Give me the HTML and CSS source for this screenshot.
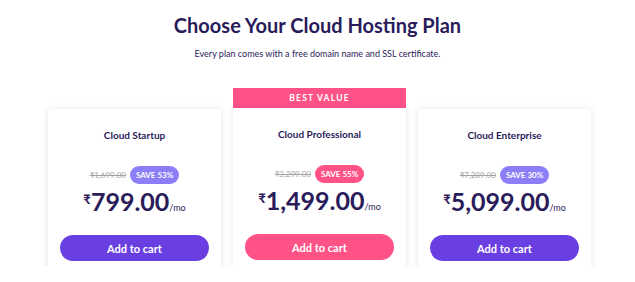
FILE: index.html
```html
<!DOCTYPE html>
<html lang="en">
<head>
    <meta charset="UTF-8">
    <meta name="viewport" content="width=device-width, initial-scale=1.0">
    <title>Cloud Hosting Plans</title>
    <link rel="stylesheet" href="styles.css">
</head>
<body>

    <h1>Choose Your Cloud Hosting Plan</h1>
    <p class="subtitle">Every plan comes with a free domain name and SSL certificate.</p>

    <div class="plans">
        <div class="plan">
            <div class="card">
                <h2>Cloud Startup</h2>
                <div class="price-row">
                    <span class="old-price">₹1,699.00</span>
                    <span class="save">SAVE 53%</span>
                </div>
                <div class="price"><span class="currency">₹</span>799.00<span class="per">/mo</span></div>
                <button class="cart">Add to cart</button>
            </div>
        </div>

        <div class="plan featured">
            <div class="banner">BEST VALUE</div>
            <div class="card">
                <h2>Cloud Professional</h2>
                <div class="price-row">
                    <span class="old-price">₹3,299.00</span>
                    <span class="save">SAVE 55%</span>
                </div>
                <div class="price"><span class="currency">₹</span>1,499.00<span class="per">/mo</span></div>
                <button class="cart">Add to cart</button>
            </div>
        </div>

        <div class="plan">
            <div class="card">
                <h2>Cloud Enterprise</h2>
                <div class="price-row">
                    <span class="old-price">₹7,289.00</span>
                    <span class="save">SAVE 30%</span>
                </div>
                <div class="price"><span class="currency">₹</span>5,099.00<span class="per">/mo</span></div>
                <button class="cart">Add to cart</button>
            </div>
        </div>
    </div>

</body>
</html>
```

FILE: styles.css
```css
body {
    margin: 0;
    padding: 0;
    font-family: Lato, "Noto Sans", sans-serif;
    background-color: #ffffff;
    color: #2a1c5a; /* dark navy purple */
    text-align: center;
    overflow: hidden;
}

h1 {
    font-size: 20px;
    font-weight: 700;
    margin: 13px 0 0;
    line-height: 24px;
}

.subtitle {
    font-size: 9px;
    margin: 11px 0 0;
    line-height: 12px;
}

.plans {
    display: flex;
    justify-content: center;
    align-items: flex-start;
    gap: 12px;
    margin-top: 28px;
    padding-left: 4px;
    height: 178px; /* bottom of the cards is cut off */
    overflow: hidden;
}

.plan {
    width: 173px;
    margin-top: 21px;
}

.plan.featured {
    margin-top: 0;
}

.banner {
    background-color: #ff5287;
    color: #ffffff;
    font-size: 8.5px;
    font-weight: 700;
    letter-spacing: 1.2px;
    height: 20px;
    line-height: 20px;
}

.card {
    background-color: #ffffff;
    border-radius: 4px;
    box-shadow: 0 0 6px rgba(40, 30, 90, 0.12);
    padding: 20px 12px 30px;
    height: 200px;
    box-sizing: border-box;
}

.featured .card {
    border-radius: 0 0 4px 4px;
}

h2 {
    font-size: 10px;
    font-weight: 700;
    margin: 0;
    line-height: 13px;
}

.price-row {
    display: flex;
    justify-content: center;
    align-items: center;
    gap: 4px;
    margin-top: 24px;
}

.old-price {
    font-size: 8px;
    color: #a3a3a8;
    text-decoration: line-through;
}

.save {
    background-color: #8c7ef7;
    color: #ffffff;
    font-size: 8px;
    font-weight: 700;
    height: 18px;
    line-height: 18px;
    padding: 0 6px;
    border-radius: 9px;
}

.featured .save {
    background-color: #ff5287;
}

.price {
    font-size: 25px;
    font-weight: 700;
    line-height: 24px;
    margin-top: 5px;
}

.currency {
    font-size: 13px;
    line-height: 0;
    vertical-align: 7px;
}

.per {
    font-size: 9px;
    font-weight: 400;
}

.cart {
    display: block;
    width: 149px;
    height: 26px;
    margin: 15px auto 0;
    border: none;
    border-radius: 13px;
    background-color: #6a3fe2;
    color: #ffffff;
    font-family: inherit;
    font-size: 11px;
    font-weight: 700;
    cursor: pointer;
}

.featured .cart {
    background-color: #ff5287;
}
```
